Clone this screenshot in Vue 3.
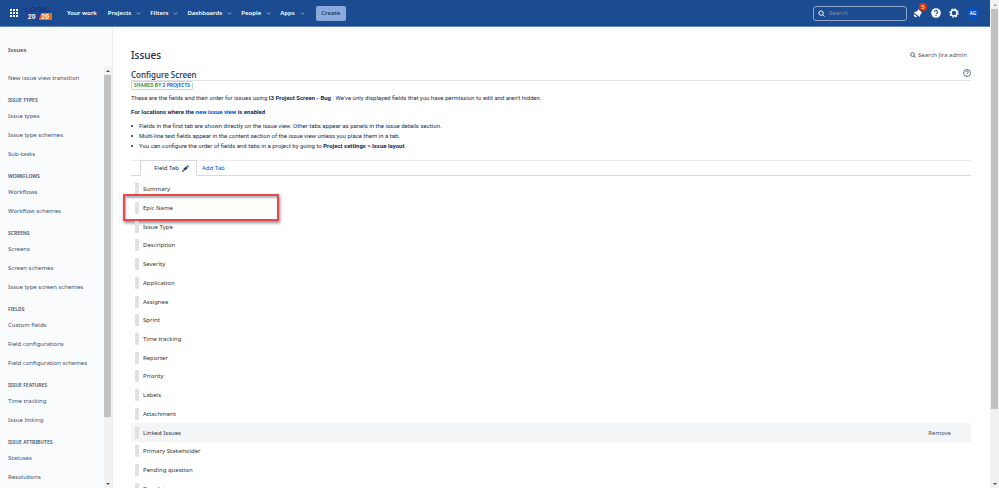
<template>
  <div class="page">
    <div class="app">
      <header class="topbar">
        <button class="icon-btn switcher" type="button" aria-label="Switch to">
          <svg viewBox="0 0 8 8" width="8" height="8" fill="#fff">
            <template v-for="y in 3" :key="y">
              <rect v-for="x in 3" :key="x" :x="(x - 1) * 3" :y="(y - 1) * 3" width="2" height="2" />
            </template>
          </svg>
        </button>
        <a class="logo" href="#" aria-label="Logic 20/20">
          <span class="logo-top">LOGIC</span>
          <span class="logo-bottom"><span class="logo-left">20</span><span class="logo-right">20</span></span>
        </a>
        <nav class="menu">
          <a href="#">Your work</a>
          <button v-for="item in menu" :key="item" type="button">
            {{ item }}
            <svg viewBox="0 0 6 4" width="5" height="3"><path d="M.8.8 3 3 5.2.8" fill="none" stroke="#c3d2ea" /></svg>
          </button>
        </nav>
        <button class="create" type="button">Create</button>
        <label class="search">
          <svg viewBox="0 0 8 8" width="7" height="7" fill="none" stroke="#fff" stroke-width="1.1">
            <circle cx="3.5" cy="3.5" r="2.5" /><path d="m5.4 5.4 2 2" />
          </svg>
          <input type="search" placeholder="Search" aria-label="Search" />
        </label>
        <div class="actions">
          <button class="icon-btn" type="button" aria-label="Notifications">
            <svg viewBox="0 0 10 10" width="10" height="10" fill="#fff">
              <path d="M5.4 1.2 9 4.8 7.6 6 6.8 9 .8 4.4 4 3.2z" /><path d="M1.2 6 4 8.4A1.8 1.8 0 0 1 1.2 6z" />
            </svg>
            <span class="badge">5</span>
          </button>
          <button class="icon-btn" type="button" aria-label="Help">
            <svg viewBox="0 0 10 10" width="10" height="10">
              <circle cx="5" cy="5" r="4.8" fill="#fff" />
              <path d="M3.5 4a1.5 1.5 0 1 1 2.3 1.2Q5 5.6 5 6.3M5 7v1" fill="none" stroke="#1b4c92" stroke-width="1.1" />
            </svg>
          </button>
          <button class="icon-btn" type="button" aria-label="Settings">
            <svg viewBox="0 0 10 10" width="10" height="10" fill="none" stroke="#fff">
              <circle cx="5" cy="5" r="3" stroke-width="1.5" />
              <circle cx="5" cy="5" r="4.1" stroke-width="1.2" stroke-dasharray="1.6 1.62" />
            </svg>
          </button>
          <button class="avatar" type="button" aria-label="Profile">AG</button>
        </div>
      </header>

      <div class="body">
        <aside class="sidebar">
          <h2 class="side-title">Issues</h2>
          <div class="side-scroll">
            <nav class="side-nav">
              <a href="#">New issue view transition</a>
              <section v-for="group in groups" :key="group.title">
                <h3>{{ group.title }}</h3>
                <a v-for="link in group.links" :key="link" href="#">{{ link }}</a>
              </section>
            </nav>
            <div class="bar side-bar" aria-hidden="true">
              <span class="arrow up"></span>
              <span class="thumb"></span>
              <span class="arrow down"></span>
            </div>
          </div>
        </aside>

        <main class="content">
          <div class="head">
            <h1>Issues</h1>
            <a class="admin-search" href="#">
              <svg viewBox="0 0 8 8" width="6" height="6" fill="none" stroke="#42526e" stroke-width="1.2">
                <circle cx="3.4" cy="3.4" r="2.5" /><path d="m5.2 5.2 2.3 2.3" />
              </svg>
              Search Jira admin
            </a>
          </div>
          <div class="subhead">
            <h2>Configure Screen</h2>
            <a href="#" aria-label="Get help">
              <svg viewBox="0 0 10 10" width="8" height="8" fill="none" stroke="#42526e">
                <circle cx="5" cy="5" r="4.4" /><path d="M3.5 4a1.5 1.5 0 1 1 2.3 1.2Q5 5.5 5 6.2M5 7v1" />
              </svg>
            </a>
          </div>
          <div class="shared">Shared by <a href="#">2 projects</a></div>
          <p>
            These are the fields and their order for issues using <strong>I3 Project Screen - Bug</strong> . We've only
            displayed fields that you have permission to edit and aren't hidden.
          </p>
          <p><strong>For locations where the <a href="#">new issue view</a> is enabled</strong></p>
          <ul class="notes">
            <li>Fields in the first tab are shown directly on the issue view. Other tabs appear as panels in the issue details section.</li>
            <li>Multi-line text fields appear in the content section of the issue view unless you place them in a tab.</li>
            <li>You can configure the order of fields and tabs in a project by going to <strong>Project settings &gt; Issue layout</strong> .</li>
          </ul>

          <div class="tabs">
            <button class="tab" type="button">
              Field Tab
              <svg viewBox="0 0 8 8" width="7" height="7" fill="#344563">
                <path d="M0 8 .8 5.2 2.8 7.2zM1.3 4.7 4.7 1.3 6.7 3.3 3.3 6.7zM5.2.8 6 0 8 2 7.2 2.8z" />
              </svg>
            </button>
            <a href="#">Add Tab</a>
          </div>

          <ul class="fields">
            <li v-for="field in fields" :key="field" :class="{ hovered: field === hovered, marked: field === marked }">
              <span class="grip"></span>
              <span class="name">{{ field }}</span>
              <button v-if="field === hovered" type="button">Remove</button>
            </li>
          </ul>
        </main>
      </div>
    </div>

    <div class="bar page-bar" aria-hidden="true">
      <span class="arrow up faint"></span>
      <span class="thumb"></span>
      <span class="arrow down"></span>
    </div>
  </div>
</template>

<script setup>
import { ref } from 'vue'

const menu = ['Projects', 'Filters', 'Dashboards', 'People', 'Apps']

const groups = [
  { title: 'Issue types', links: ['Issue types', 'Issue type schemes', 'Sub-tasks'] },
  { title: 'Workflows', links: ['Workflows', 'Workflow schemes'] },
  { title: 'Screens', links: ['Screens', 'Screen schemes', 'Issue type screen schemes'] },
  { title: 'Fields', links: ['Custom fields', 'Field configurations', 'Field configuration schemes'] },
  { title: 'Issue features', links: ['Time tracking', 'Issue linking'] },
  { title: 'Issue attributes', links: ['Statuses', 'Resolutions'] },
]

const fields = [
  'Summary',
  'Epic Name',
  'Issue Type',
  'Description',
  'Severity',
  'Application',
  'Assignee',
  'Sprint',
  'Time tracking',
  'Reporter',
  'Priority',
  'Labels',
  'Attachment',
  'Linked Issues',
  'Primary Stakeholder',
  'Pending question',
  'Due date',
]

const hovered = ref('Linked Issues')
const marked = 'Epic Name'
</script>

<style>
body {
  margin: 0;
  overflow: hidden;
}
</style>

<style scoped>
*,
*::before,
*::after {
  box-sizing: border-box;
}

.page {
  display: flex;
  height: 100vh;
  overflow: hidden;
  background: #fff;
  color: #172b4d;
  font: 6px/10px "Noto Sans", "Open Sans", sans-serif;
}

.app {
  flex: 1;
  min-width: 0;
  display: flex;
  flex-direction: column;
}

h1,
h2,
h3,
p,
ul {
  margin: 0;
  padding: 0;
}

ul {
  list-style: none;
}

a {
  color: #0052cc;
  text-decoration: none;
}

button,
input {
  padding: 0;
  border: 0;
  background: none;
  color: inherit;
  font: inherit;
}

svg {
  display: block;
  flex: none;
}

.topbar {
  flex: none;
  display: flex;
  align-items: center;
  height: 27px;
  padding: 0 11px 0 10px;
  background: #1b4c92;
  border-bottom: 1px solid #5f83b8;
  color: #fff;
}

.icon-btn {
  position: relative;
  display: flex;
}

.logo {
  width: 27px;
  margin: 0 15px 0 7px;
  font: 700 8px/7px "Liberation Sans", sans-serif;
}

.logo-top {
  display: block;
  color: #2a2682;
}

.logo-bottom {
  display: flex;
  font-size: 7px;
  line-height: 7px;
  color: #fff;
}

.logo-left,
.logo-right {
  flex: 1;
  text-align: center;
}

.logo-left {
  background: #2f3c96;
}

.logo-right {
  background: #f26522;
  clip-path: polygon(3px 0, 100% 0, 100% 100%, 0 100%);
}

.menu {
  display: flex;
  gap: 9px;
  font-weight: 600;
}

.menu a {
  margin-right: 2px;
  color: #fff;
}

.menu button {
  display: flex;
  align-items: center;
  gap: 5px;
}

.create {
  width: 30px;
  height: 15px;
  margin-left: 11px;
  border-radius: 2px;
  background: #8ca9dd;
  color: #172b4d;
  font-weight: 500;
}

.search {
  display: flex;
  align-items: center;
  gap: 4px;
  width: 94px;
  height: 15px;
  margin-left: auto;
  padding: 0 4px;
  border: 1px solid #8fa8cf;
  border-radius: 3px;
}

.search input {
  flex: 1;
  min-width: 0;
  outline: none;
}

.search input::placeholder {
  color: #7e90a8;
}

.actions {
  display: flex;
  align-items: center;
  gap: 8px;
  margin-left: 6px;
}

.badge {
  position: absolute;
  top: -5px;
  right: -4px;
  width: 8px;
  height: 8px;
  border-radius: 50%;
  background: #de350b;
  font-size: 6px;
  line-height: 8px;
  text-align: center;
}

.avatar {
  width: 12px;
  height: 12px;
  border-radius: 50%;
  background: #0052cc;
  font-size: 5px;
  font-weight: 600;
}

.body {
  flex: 1;
  min-height: 0;
  display: flex;
}

.sidebar {
  flex: none;
  display: flex;
  flex-direction: column;
  width: 113px;
  border-right: 1px solid #ebecf0;
  background: #fafbfc;
  color: #42526e;
}

.side-title {
  padding: 18px 8px 11px;
  font-size: 6px;
  font-weight: 600;
  line-height: 10px;
}

.side-scroll {
  flex: 1;
  min-height: 0;
  display: flex;
}

.side-nav {
  flex: 1;
  overflow: hidden;
  padding: 3px 0 0 8px;
}

.side-nav a {
  display: block;
  color: #42526e;
  line-height: 19px;
  white-space: nowrap;
}

.side-nav h3 {
  padding-top: 6px;
  font-size: 5px;
  font-weight: 600;
  line-height: 13px;
  text-transform: uppercase;
}

.bar {
  flex: none;
  display: flex;
  flex-direction: column;
  background: #f1f1f1;
}

.thumb {
  background: #c1c1c1;
}

.arrow {
  display: flex;
  align-items: center;
  justify-content: center;
  height: 9px;
}

.arrow::after {
  content: "";
  border: 2px solid transparent;
}

.up::after {
  border-top: 0;
  border-bottom-color: #505050;
}

.down {
  margin-top: auto;
}

.down::after {
  border-bottom: 0;
  border-top-color: #505050;
}

.faint::after {
  border-bottom-color: #a3a3a3;
}

.side-bar {
  width: 8px;
  padding-right: 1px;
}

.side-bar .thumb {
  height: 81%;
}

.page-bar {
  width: 9px;
  padding: 0 1px;
}

.page-bar .thumb {
  height: 82%;
}

.content {
  flex: 1;
  min-width: 0;
  overflow: hidden;
  padding: 20px 19px 0 18px;
}

.content p,
.notes {
  font-family: Roboto, "Open Sans", sans-serif;
}

.content p {
  margin-bottom: 4px;
}

.content strong {
  font-weight: 700;
}

.head {
  display: flex;
  align-items: center;
  justify-content: space-between;
  padding-right: 4px;
}

.head h1 {
  font-size: 10px;
  font-weight: 500;
  line-height: 16px;
}

.admin-search {
  display: flex;
  align-items: center;
  gap: 2px;
  color: #42526e;
}

.subhead {
  display: flex;
  align-items: flex-end;
  justify-content: space-between;
  height: 18px;
  border-bottom: 1px solid #dfe1e6;
}

.subhead h2 {
  font-size: 8px;
  font-weight: 500;
  line-height: 10px;
}

.subhead a {
  padding-bottom: 3px;
}

.shared {
  width: max-content;
  margin: 0 0 3px;
  padding: 0 2px;
  border: 1px solid #b7dfc4;
  border-radius: 2px;
  color: #14892c;
  font-size: 5px;
  font-weight: 600;
  line-height: 7px;
  text-transform: uppercase;
}

.notes {
  padding-left: 8px;
}

.notes li {
  position: relative;
}

.notes li::before {
  content: "";
  position: absolute;
  left: -8px;
  top: 4px;
  width: 2px;
  height: 2px;
  border-radius: 50%;
  background: #172b4d;
}

.tabs {
  display: flex;
  align-items: center;
  gap: 5px;
  height: 16px;
  margin: 9px 0 4px;
  padding-left: 9px;
  border-top: 1px solid #ebecf0;
  border-bottom: 1px solid #d5d8de;
}

.tab {
  display: flex;
  align-items: center;
  justify-content: flex-end;
  gap: 3px;
  width: 57px;
  height: 16px;
  padding-right: 7px;
  border: 1px solid #d5d8de;
  border-bottom-color: #fff;
}

.fields {
  display: grid;
  grid-auto-rows: 1fr;
  min-height: 318px;
}

.fields li {
  position: relative;
  display: flex;
  align-items: center;
  padding: 0 20px 0 4px;
  color: #333;
}

.grip {
  width: 4px;
  height: 12px;
  margin-right: 4px;
  background: repeating-linear-gradient(#dcdcdc 0 1px, #e6e6e6 1px 2px);
}

.name {
  flex: 1;
}

.fields button {
  color: #42526e;
}

.hovered {
  background: #f4f5f7;
}

.marked::after {
  content: "";
  position: absolute;
  left: -8px;
  top: -5px;
  width: 156px;
  height: 27px;
  border: 2px solid #e5484d;
  box-shadow: 1px 2px 3px rgba(0, 0, 0, 0.45), inset 1px 2px 2px rgba(0, 0, 0, 0.3);
}
</style>
